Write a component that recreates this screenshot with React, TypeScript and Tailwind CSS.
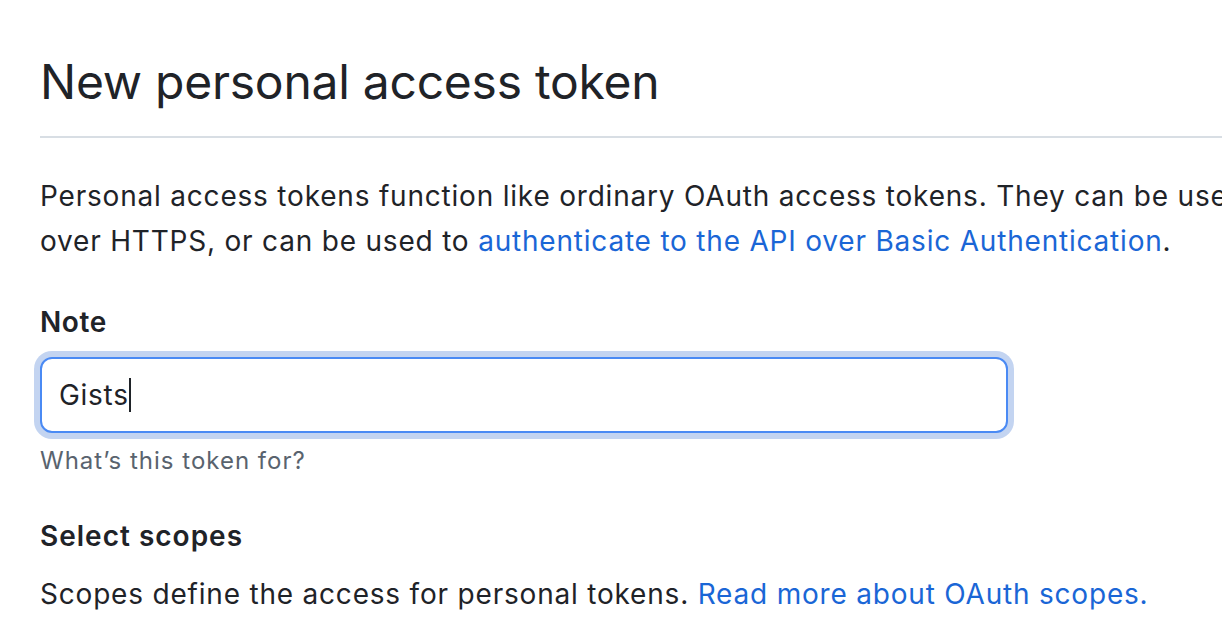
const App = () => {
  return (
    <div className="min-h-screen w-full overflow-hidden bg-white pl-10 pt-[50px] font-['Inter',sans-serif] text-[#1f2328]">
      <div className="border-b-2 border-[#d8dee4] pb-[22px]">
        <h1 className="text-[48px] font-normal leading-[64px] tracking-[-0.25px]">
          New personal access token
        </h1>
      </div>
      <p className="mt-[36px] whitespace-nowrap text-[28px] leading-[45px] tracking-[0.8px]">
        Personal access tokens function like ordinary OAuth access tokens. They can be used instead of a password for Git
        <br />
        over HTTPS, or can be used to{" "}
        <a href="#" className="text-[#1a66d6]">
          authenticate to the API over Basic Authentication
        </a>
        .
      </p>
      <div className="mt-[37px]">
        <label className="block text-[28px] font-semibold leading-[42px] tracking-[0.6px]">Note</label>
        <div className="mt-[14px] flex h-[76px] w-[968px] items-center rounded-[12px] border-2 border-[#4a8af4] bg-white pl-[17px] shadow-[0_0_0_6px_#c3d4f1]">
          <span className="text-[28px] leading-none tracking-[0.7px]">Gists</span>
          <span className="h-[34px] w-[2px] bg-[#1f2328]" />
        </div>
        <p className="mt-[10px] text-[24px] leading-[36px] tracking-[1px] text-[#59636e]">What’s this token for?</p>
      </div>
      <h3 className="mt-[36px] text-[28px] font-semibold leading-[42px] tracking-[1px]">Select scopes</h3>
      <p className="mt-[16px] whitespace-nowrap text-[28px] leading-[42px] tracking-[0.8px]">
        Scopes define the access for personal tokens.{" "}
        <a href="#" className="text-[#1a66d6]">
          Read more about OAuth scopes.
        </a>
      </p>
    </div>
  );
};

export default App;
